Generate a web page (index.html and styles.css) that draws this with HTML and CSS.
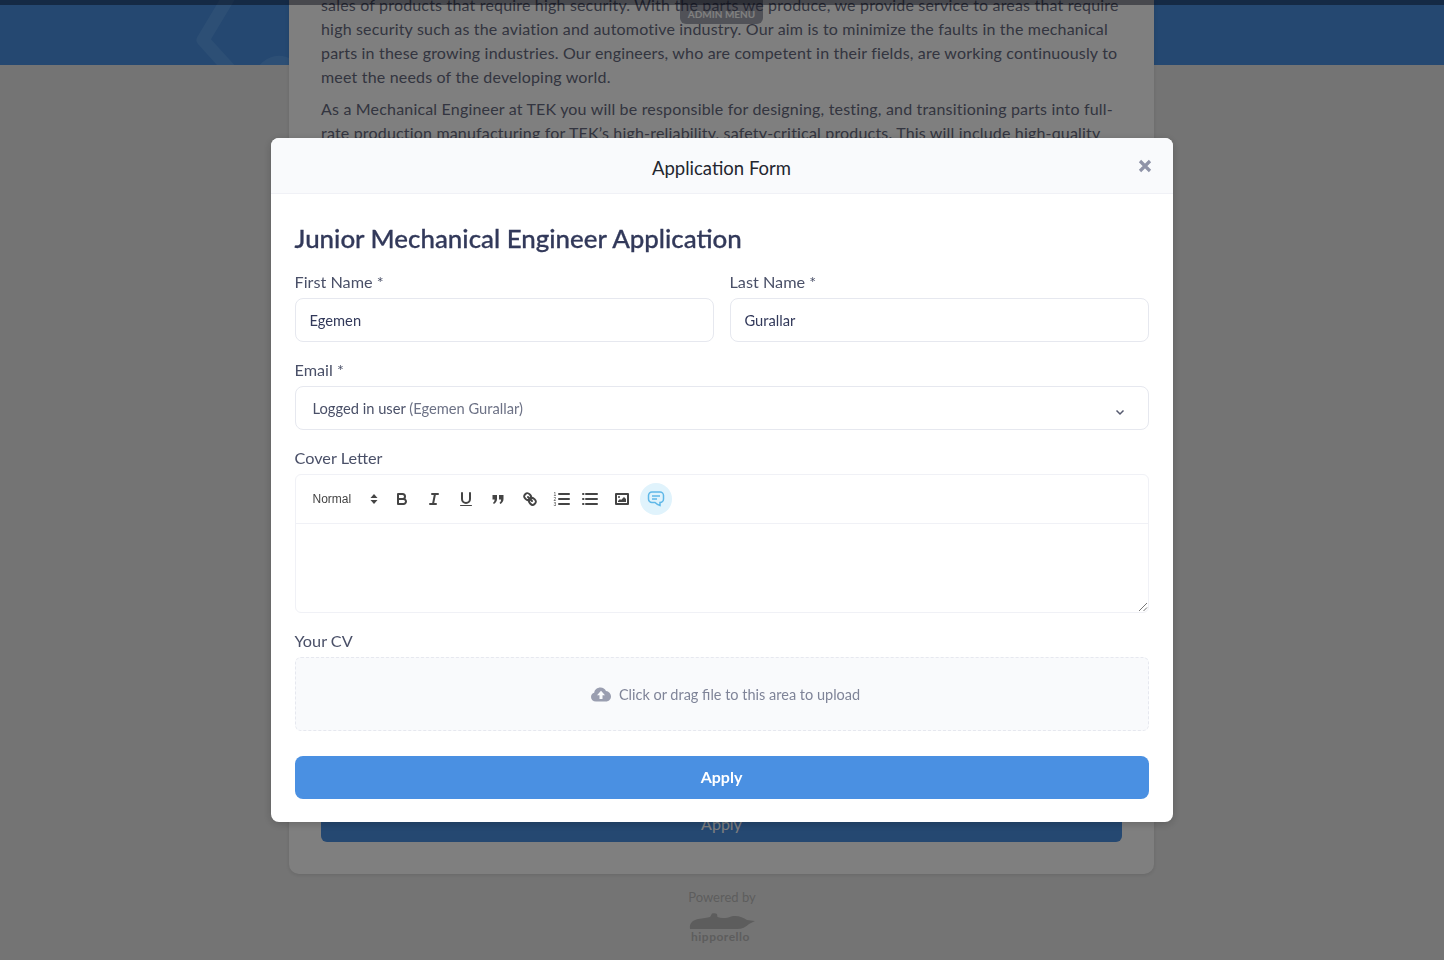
FILE: index.html
```html
<!DOCTYPE html>
<html lang="en">
<head>
    <meta charset="UTF-8">
    <meta name="viewport" content="width=device-width, initial-scale=1.0">
    <title>Application Form</title>
    <link rel="stylesheet" href="styles.css">
</head>
<body>

<div class="top-strip"></div>

<div class="hero">
    <svg class="hero-mark" width="130" height="65" viewBox="0 0 130 65">
        <path d="M40 -5 L13 40 L42 72 M72 72 Q85 56 100 66" fill="none" stroke="#5a9eea" stroke-width="13" stroke-linejoin="round"/>
    </svg>
</div>

<div class="job-card">
    <div class="job-text">
        <p>sales of products that require high security. With the parts we produce, we provide service to areas that require high security such as the aviation and automotive industry. Our aim is to minimize the faults in the mechanical parts in these growing industries. Our engineers, who are competent in their fields, are working continuously to meet the needs of the developing world.</p>
        <p>As a Mechanical Engineer at TEK you will be responsible for designing, testing, and transitioning parts into full-rate production manufacturing for TEK’s high-reliability, safety-critical products. This will include high-quality</p>
    </div>
    <button class="job-apply">Apply</button>
</div>

<div class="admin-tab">ADMIN MENU</div>

<div class="powered">
    <span>Powered by</span>
    <svg width="66" height="16" viewBox="0 0 66 16">
        <path d="M1 16 C0 10 4 7 9 6 C14 5 18 5 21 4 L23 0.500 C25 0 27 0 28 1 L28.500 4 C33 6 38 5 42 3.500 C48 2 54 4 58 7 L66 8 L60 11 C57 14 53 16 48 16 Z" fill="#bababa"/>
    </svg>
    <b>hipporello</b>
</div>

<div class="overlay">
    <div class="modal">
        <div class="modal-header">
            <span class="modal-title">Application Form</span>
            <svg class="modal-close" width="14" height="14" viewBox="0 0 14 14">
                <path d="M2 2 L12 12 M12 2 L2 12" fill="none" stroke="#8f93a8" stroke-width="3.2"/>
            </svg>
        </div>
        <div class="modal-body">
            <h2>Junior Mechanical Engineer Application</h2>

            <div class="name-row">
                <div class="field">
                    <label>First Name *</label>
                    <div class="input">Egemen</div>
                </div>
                <div class="field">
                    <label>Last Name *</label>
                    <div class="input">Gurallar</div>
                </div>
            </div>

            <div class="field">
                <label>Email *</label>
                <div class="input input-select">
                    <span><span class="dark">Logged in user</span> (Egemen Gurallar)</span>
                    <svg width="10" height="7" viewBox="0 0 10 7">
                        <path d="M1.500 1.500 L5 5 L8.500 1.500" fill="none" stroke="#55596e" stroke-width="1.500"/>
                    </svg>
                </div>
            </div>

            <div class="field">
                <label>Cover Letter</label>
                <div class="editor">
                    <div class="toolbar">
                        <div class="picker">
                            <span>Normal</span>
                            <svg width="8" height="12" viewBox="0 0 8 12">
                                <path d="M4 1 L7.500 5 L0.500 5 Z M4 11 L7.500 7 L0.500 7 Z" fill="#444"/>
                            </svg>
                        </div>
                        <button class="tool">
                            <svg width="18" height="18" viewBox="0 0 18 18" class="ql">
                                <path d="M5,4H9.500A2.500,2.500,0,0,1,12,6.500v0A2.500,2.500,0,0,1,9.500,9H5V4Z"/>
                                <path d="M5,9h5.500A2.500,2.500,0,0,1,13,11.500v0A2.500,2.500,0,0,1,10.500,14H5V9Z"/>
                            </svg>
                        </button>
                        <button class="tool">
                            <svg width="18" height="18" viewBox="0 0 18 18" class="ql">
                                <line x1="7" x2="13" y1="4" y2="4"/>
                                <line x1="5" x2="11" y1="14" y2="14"/>
                                <line x1="8" x2="10" y1="14" y2="4"/>
                            </svg>
                        </button>
                        <button class="tool">
                            <svg width="18" height="18" viewBox="0 0 18 18" class="ql">
                                <path d="M5,3V9a4,4,0,0,0,4,4H9a4,4,0,0,0,4-4V3"/>
                                <rect class="fill" x="3" y="15" width="12" height="1" rx="0.500" ry="0.500"/>
                            </svg>
                        </button>
                        <button class="tool">
                            <svg width="18" height="18" viewBox="0 0 18 18" class="ql">
                                <path class="fill" d="M3.500 5 H8 V9 C8 11.500 6.500 13 4.800 14 L4 12.800 C5 12 5.600 11 5.600 9.500 H3.500 Z"/>
                                <path class="fill" d="M10 5 H14.500 V9 C14.500 11.500 13 13 11.300 14 L10.500 12.800 C11.500 12 12.100 11 12.100 9.500 H10 Z"/>
                            </svg>
                        </button>
                        <button class="tool">
                            <svg width="18" height="18" viewBox="0 0 18 18" class="ql">
                                <line x1="7" x2="11" y1="7" y2="11"/>
                                <path d="M8.900,4.577a3.476,3.476,0,0,1,.36,4.679A3.476,3.476,0,0,1,4.577,8.900C3.185,7.500,2.035,6.400,4.217,4.217S7.500,3.185,8.900,4.577Z"/>
                                <path d="M13.423,9.100a3.476,3.476,0,0,0-4.679-.36,3.476,3.476,0,0,0,.36,4.679c1.392,1.392,2.500,2.542,4.679.36S14.815,10.500,13.423,9.100Z"/>
                            </svg>
                        </button>
                        <button class="tool tool-list">
                            <svg width="18" height="18" viewBox="0 0 18 18" class="ql">
                                <line x1="7" x2="17" y1="4" y2="4"/>
                                <line x1="7" x2="17" y1="9" y2="9"/>
                                <line x1="7" x2="17" y1="14" y2="14"/>
                                <text class="num" x="1.500" y="6">1</text>
                                <text class="num" x="1.500" y="11">2</text>
                                <text class="num" x="1.500" y="16">3</text>
                            </svg>
                        </button>
                        <button class="tool tool-list">
                            <svg width="18" height="18" viewBox="0 0 18 18" class="ql">
                                <line x1="4" x2="15" y1="4" y2="4"/>
                                <line x1="4" x2="15" y1="9" y2="9"/>
                                <line x1="4" x2="15" y1="14" y2="14"/>
                                <line x1="1" x2="1.500" y1="4" y2="4"/>
                                <line x1="1" x2="1.500" y1="9" y2="9"/>
                                <line x1="1" x2="1.500" y1="14" y2="14"/>
                            </svg>
                        </button>
                        <button class="tool">
                            <svg width="18" height="18" viewBox="0 0 18 18" class="ql">
                                <rect width="12" height="10" x="3" y="4"/>
                                <circle class="fill" cx="6" cy="7" r="1"/>
                                <polygon class="fill" points="5 12 5 11 7 9 8 10 11 7 13 9 13 12 5 12"/>
                            </svg>
                        </button>
                        <button class="tool-comment">
                            <svg width="18" height="18" viewBox="0 0 18 18">
                                <path d="M5 2 H13 A3.500 3.500 0 0 1 16.500 5.500 V9 A3.500 3.500 0 0 1 13 12.500 V15.500 Q10.500 15 8 12.500 H5 A3.500 3.500 0 0 1 1.500 9 V5.500 A3.500 3.500 0 0 1 5 2 Z" fill="none" stroke="#5fb8e8" stroke-width="1.500"/>
                                <path d="M5 6 H13 M5 9 H10" fill="none" stroke="#5fb8e8" stroke-width="1.500"/>
                            </svg>
                        </button>
                    </div>
                    <div class="editor-area">
                        <svg class="grip" width="10" height="10" viewBox="0 0 10 10">
                            <path d="M1 9 L9 1 M5.500 9 L9 5.500" fill="none" stroke="#777" stroke-width="1"/>
                        </svg>
                    </div>
                </div>
            </div>

            <div class="field">
                <label>Your CV</label>
                <div class="dropzone">
                    <svg width="20" height="15" viewBox="0 0 20 15">
                        <path d="M5 14.500 C2 14.500 0 12.500 0 10 C0 8 1.300 6.300 3.200 5.800 C3.500 2.600 6.200 0.500 9.500 0.500 C12 0.500 14 1.800 15 4 C17.800 4.300 20 6.800 20 9.500 C20 12.300 17.800 14.500 15 14.500 Z" fill="#9a9eb0"/>
                        <path d="M10 3.800 L14 8.200 H11.500 V12 H8.500 V8.200 H6 Z" fill="#f9fafc"/>
                    </svg>
                    <span>Click or drag file to this area to upload</span>
                </div>
            </div>

            <button class="btn-apply">Apply</button>
        </div>
    </div>
</div>

</body>
</html>
```

FILE: styles.css
```css
html, body {
    height: 960px;
    overflow: hidden;
}
body {
    font-family: Lato, "Noto Sans", sans-serif;
    background-color: #e9e9e9;
    color: #32395a;
    margin: 0;
    padding: 0;
}
.top-strip {
    position: absolute;
    top: 0;
    left: 0;
    right: 0;
    height: 5px;
    background-color: rgba(0, 5, 25, 0.43);
    z-index: 3;
}
.admin-tab {
    position: absolute;
    top: 0;
    left: 680px;
    width: 83px;
    height: 24px;
    padding-top: 8px;
    box-sizing: border-box;
    background-color: rgba(50, 55, 80, 0.45);
    color: #fff;
    border-radius: 0 0 6px 6px;
    font-size: 10px;
    font-weight: 700;
    text-align: center;
    z-index: 2;
}
.hero {
    height: 65px;
    background-color: #4a90e2;
    overflow: hidden;
}
.hero-mark {
    display: block;
    margin-left: 190px;
}
.job-card {
    position: relative;
    width: 865px;
    height: 874px;
    margin: -65px auto 0;
    left: -0.5px;
    background-color: #fff;
    border-radius: 0 0 10px 10px;
    box-shadow: 0 1px 4px rgba(0, 0, 0, 0.12);
    box-sizing: border-box;
    padding: 0 32px;
    overflow: hidden;
    display: flex;
    flex-direction: column;
    justify-content: space-between;
}
.job-text {
    margin-top: -7px;
    font-size: 16px;
    line-height: 24px;
    letter-spacing: 0.18px;
    color: #666a80;
}
.job-text p {
    margin: 0 0 8px;
}
.job-apply {
    height: 50px;
    margin-bottom: 32px;
    padding-top: 14px;
    border: none;
    border-radius: 0 0 6px 6px;
    background-color: #4a90e2;
    color: #fff;
    font-family: inherit;
    font-size: 16px;
    font-weight: 400;
}
.powered {
    display: flex;
    flex-direction: column;
    align-items: center;
    margin-top: 15px;
    color: #bbb;
}
.powered span {
    font-size: 13px;
    line-height: 16px;
    color: #bbb;
}
.powered svg {
    margin-top: 8px;
}
.powered b {
    font-size: 12px;
    line-height: 16px;
    letter-spacing: 0.5px;
    color: #bbb;
    margin-left: -3px;
}
.overlay {
    position: fixed;
    top: 0;
    left: 0;
    right: 0;
    bottom: 0;
    z-index: 5;
    padding-right: 1px;
    background-color: rgba(0, 0, 0, 0.5);
    display: flex;
    align-items: center;
    justify-content: center;
}
.modal {
    width: 902px;
    height: 684px;
    background-color: #fff;
    border-radius: 8px;
    box-shadow: 0 2px 8px rgba(0, 0, 0, 0.2);
    overflow: hidden;
}
.modal-header {
    position: relative;
    height: 56px;
    box-sizing: border-box;
    padding-top: 4px;
    display: flex;
    align-items: center;
    justify-content: center;
    background-color: #f9fafc;
    border-bottom: 1px solid #f0f1f6;
}
.modal-title {
    font-size: 18.5px;
    color: #23262f;
}
.modal-close {
    position: absolute;
    right: 21px;
    top: 21px;
}
.modal-body {
    padding: 24px;
    display: flex;
    flex-direction: column;
}
.modal-body h2 {
    margin: 0 0 14px;
    font-size: 25.900px;
    line-height: 40px;
    font-weight: 500;
    color: #32395a;
    -webkit-text-stroke: 0.3px #32395a;
}
.name-row {
    display: flex;
    gap: 16px;
}
.name-row .field {
    flex: 1;
}
.field {
    margin-bottom: 18px;
}
.field label {
    display: block;
    height: 26px;
    font-size: 16.25px;
    line-height: 20px;
    color: #4a5068;
}
.input {
    height: 44px;
    box-sizing: border-box;
    padding: 0 14px;
    border: 1px solid #e6e8ef;
    border-radius: 8px;
    display: flex;
    align-items: center;
    font-size: 14.700px;
    color: #32395a;
}
.input-select {
    justify-content: space-between;
    padding: 0 23px 0 17px;
    color: #6d7286;
}
.input-select svg {
    margin-top: 8px;
}
.dark {
    color: #4a5068;
}
.editor {
    height: 139px;
    box-sizing: border-box;
    border: 1px solid #f0f1f6;
    border-radius: 6px;
    display: flex;
    flex-direction: column;
}
.toolbar {
    height: 49px;
    box-sizing: border-box;
    border-bottom: 1px solid #f0f1f6;
    padding-left: 17px;
    display: flex;
    align-items: center;
}
.picker {
    width: 73px;
    flex: none;
    padding-right: 8px;
    box-sizing: border-box;
    display: flex;
    align-items: center;
    justify-content: space-between;
    font-family: "Liberation Sans", Arial, sans-serif;
    font-size: 12px;
    color: #444;
}
.tool {
    width: 32px;
    height: 24px;
    flex: none;
    border: none;
    padding: 0;
    background: none;
    display: flex;
    align-items: center;
    justify-content: center;
}
.tool-list {
    width: 30px;
}
.tool-comment {
    width: 32px;
    height: 32px;
    flex: none;
    margin-left: 2px;
    border: none;
    padding: 0;
    border-radius: 50%;
    background-color: #e0f3fc;
    display: flex;
    align-items: center;
    justify-content: center;
}
.ql {
    fill: none;
    stroke: #444;
    stroke-width: 2;
    stroke-linecap: round;
    stroke-linejoin: round;
}
.ql .fill {
    fill: #444;
    stroke: none;
}
.ql .num {
    fill: #444;
    stroke: none;
    font-family: "Liberation Sans", Arial, sans-serif;
    font-size: 5px;
}
.editor-area {
    flex: 1;
    position: relative;
}
.grip {
    position: absolute;
    right: 0;
    bottom: 0;
}
.dropzone {
    height: 74px;
    box-sizing: border-box;
    padding: 1px 0 0 8px;
    border: 1px dashed #e6e8ef;
    border-radius: 6px;
    background-color: #f9fafc;
    display: flex;
    align-items: center;
    justify-content: center;
    gap: 8px;
    font-size: 14.500px;
    color: #7f8498;
}
.btn-apply {
    height: 43px;
    margin-top: 7px;
    padding-bottom: 4px;
    border: none;
    border-radius: 8px;
    background-color: #4a90e2;
    color: #fff;
    font-family: inherit;
    font-size: 16px;
    font-weight: 700;
}
```
